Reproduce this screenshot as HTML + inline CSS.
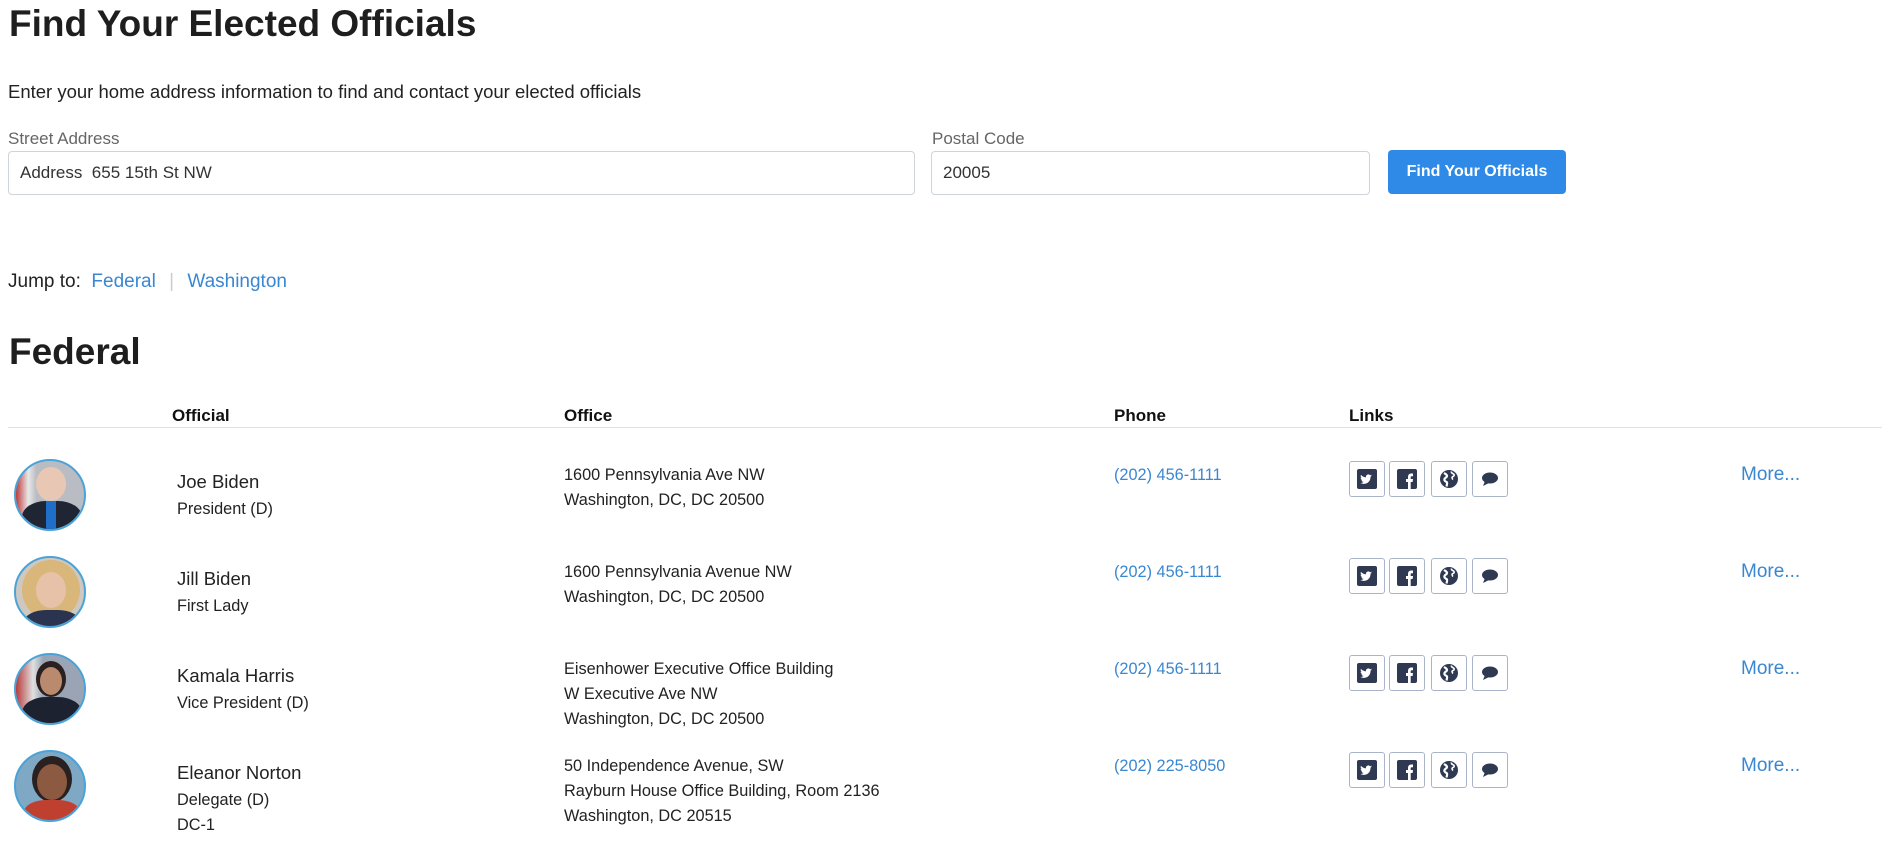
<!DOCTYPE html>
<html><head><meta charset="utf-8"><style>
*{box-sizing:border-box;margin:0;padding:0}
body{width:1882px;height:853px;overflow:hidden;background:#fff;font-family:"Liberation Sans","DejaVu Sans",sans-serif;color:#212529;position:relative}
.a{position:absolute;white-space:nowrap}
h1{position:absolute;font-size:37px;font-weight:bold;left:9px;color:#1e1e1e}
.lbl{font-size:17px;color:#666}
.inp{position:absolute;border:1px solid #ced4da;border-radius:4px;font-size:17px;padding:0 11px;display:flex;align-items:center;color:#333}
.btn{position:absolute;left:1388px;top:150px;width:178px;height:44px;background:#2e8ae6;color:#fff;border-radius:4px;font-size:16px;font-weight:bold;display:flex;align-items:center;justify-content:center}
.th{font-size:17px;font-weight:bold;top:406px;color:#111}
.av{position:absolute;left:14px;width:72px;height:72px;border-radius:50%;border:2px solid #4aa3d8;overflow:hidden}
.nm{font-size:18.5px;color:#222}
.sm{font-size:16.3px;line-height:25px;color:#222}
.blue{color:#3a87d1}
.ic{position:absolute;width:36px;height:36px;border:1px solid #aab4c8;border-radius:3px;display:flex;align-items:center;justify-content:center}
</style></head><body>
<h1 style="top:3px">Find Your Elected Officials</h1>
<div class="a" style="left:8px;top:81px;font-size:18.5px;color:#222">Enter your home address information to find and contact your elected officials</div>
<div class="a lbl" style="left:8px;top:129px">Street Address</div>
<div class="a lbl" style="left:932px;top:129px">Postal Code</div>
<div class="inp" style="left:8px;top:151px;width:907px;height:44px">Address&nbsp; 655 15th St NW</div>
<div class="inp" style="left:931px;top:151px;width:439px;height:44px">20005</div>
<div class="btn">Find Your Officials</div>
<div class="a" style="left:8px;top:271px;font-size:19px;color:#222">Jump to:&nbsp; <span class="blue">Federal</span> <span style="color:#ccc;margin:0 8px">|</span> <span class="blue">Washington</span></div>
<h1 style="top:331px">Federal</h1>
<div class="a th" style="left:172px">Official</div>
<div class="a th" style="left:564px">Office</div>
<div class="a th" style="left:1114px">Phone</div>
<div class="a th" style="left:1349px">Links</div>
<div class="a" style="left:8px;top:427px;width:1874px;height:1px;background:#dee2e6"></div>

<div class="av" style="top:459px;background:linear-gradient(90deg,#c0393b 0,#e8e8e8 18%,#b9bcc2 30%,#b9bcc2 100%)"><div style="position:absolute;left:20px;top:6px;width:30px;height:34px;border-radius:50%;background:#e8c8b4"></div><div style="position:absolute;left:6px;top:40px;width:60px;height:40px;border-radius:40% 40% 0 0;background:#1f2533"></div><div style="position:absolute;left:30px;top:40px;width:10px;height:30px;background:#1f6fc8"></div></div>
<div class="av" style="top:556px;background:#cfc8c0"><div style="position:absolute;left:6px;top:2px;width:58px;height:60px;border-radius:50%;background:#d9b67a"></div><div style="position:absolute;left:20px;top:14px;width:30px;height:36px;border-radius:50%;background:#e8c2a8"></div><div style="position:absolute;left:8px;top:52px;width:56px;height:30px;background:#2a3450;border-radius:40% 40% 0 0"></div></div>
<div class="av" style="top:653px;background:linear-gradient(90deg,#b83a3a 0,#e0e0e0 25%,#9aa4b4 40%)"><div style="position:absolute;left:20px;top:6px;width:30px;height:36px;border-radius:50%;background:#2b2020"></div><div style="position:absolute;left:24px;top:12px;width:22px;height:28px;border-radius:50%;background:#b98a6e"></div><div style="position:absolute;left:6px;top:42px;width:60px;height:40px;background:#1d2230;border-radius:40% 40% 0 0"></div></div>
<div class="av" style="top:750px;background:#7fa8c4"><div style="position:absolute;left:16px;top:4px;width:40px;height:46px;border-radius:50%;background:#2a2020"></div><div style="position:absolute;left:21px;top:12px;width:30px;height:36px;border-radius:50%;background:#8b5a40"></div><div style="position:absolute;left:8px;top:48px;width:56px;height:30px;background:#c0402f;border-radius:40% 40% 0 0"></div></div>

<div class="a nm" style="left:177px;top:471px">Joe Biden</div>
<div class="a sm" style="left:177px;top:497px">President (D)</div>
<div class="a sm" style="left:564px;top:463px">1600 Pennsylvania Ave NW<br>Washington, DC, DC 20500</div>
<div class="a sm blue" style="left:1114px;top:463px">(202) 456-1111</div>

<div class="a nm" style="left:177px;top:568px">Jill Biden</div>
<div class="a sm" style="left:177px;top:594px">First Lady</div>
<div class="a sm" style="left:564px;top:560px">1600 Pennsylvania Avenue NW<br>Washington, DC, DC 20500</div>
<div class="a sm blue" style="left:1114px;top:560px">(202) 456-1111</div>

<div class="a nm" style="left:177px;top:665px">Kamala Harris</div>
<div class="a sm" style="left:177px;top:691px">Vice President (D)</div>
<div class="a sm" style="left:564px;top:657px">Eisenhower Executive Office Building<br>W Executive Ave NW<br>Washington, DC, DC 20500</div>
<div class="a sm blue" style="left:1114px;top:657px">(202) 456-1111</div>

<div class="a nm" style="left:177px;top:762px">Eleanor Norton</div>
<div class="a sm" style="left:177px;top:788px">Delegate (D)<br>DC-1</div>
<div class="a sm" style="left:564px;top:754px">50 Independence Avenue, SW<br>Rayburn House Office Building, Room 2136<br>Washington, DC 20515</div>
<div class="a sm blue" style="left:1114px;top:754px">(202) 225-8050</div>

<div id="icons"></div>
<script>
var tops=[461,558,655,752],h='';
var tw='<svg width="20" height="20" viewBox="0 0 20 20"><rect width="20" height="20" rx="2" fill="#2f3a52"/><path d="M15 6.5c-.5.2-1 .3-1.4.4.5-.3.9-.8 1.1-1.3-.5.3-1 .5-1.6.6a2.4 2.4 0 0 0-4.1 2.2c-2-.1-3.8-1.1-5-2.5-.7 1.1-.3 2.5.7 3.2-.4 0-.8-.1-1.1-.3 0 1.2.8 2.2 1.9 2.4-.4.1-.7.1-1.1 0 .3 1 1.2 1.700 2.3 1.7A4.8 4.8 0 0 1 3.5 14c4.5 2.5 10-.5 10-5.9v-.3c.5-.4.9-.8 1.5-1.3z" fill="#fff"/></svg>';
var fb='<svg width="20" height="20" viewBox="0 0 20 20"><rect width="20" height="20" rx="2" fill="#2f3a52"/><path d="M11 20v-7H9v-3h2V8c0-2.3 1.3-3.5 3.4-3.5H16v2.8h-1.2c-.9 0-1.1.4-1.1 1.1V10H16l-.4 3h-1.9v7z" fill="#fff"/></svg>';
var gl='<svg width="20" height="20" viewBox="0 0 20 20"><circle cx="10" cy="10" r="9" fill="#2f3a52"/><path d="M5 4c1.5 1 3 1.5 3 3s-2 1.5-2.5 3 1 2.5 2 3 .5 2.5 0 4.5" stroke="#fff" stroke-width="2.2" fill="none"/><path d="M12.5 2.5c-.5 1.5 1 2 2 2.5s1 2-.5 2.5-1 2 0 3" stroke="#fff" stroke-width="1.6" fill="none"/></svg>';
var ch='<svg width="20" height="20" viewBox="0 0 20 20"><ellipse cx="10" cy="9" rx="8" ry="5.5" fill="#2f3a52"/><path d="M5 12l-2 5 6-3z" fill="#2f3a52"/></svg>';
var ics=[tw,fb,gl,ch],xs=[1349,1389,1431,1472];
tops.forEach(function(t){for(var i=0;i<4;i++)h+='<div class="ic" style="left:'+xs[i]+'px;top:'+t+'px">'+ics[i]+'</div>';h+='<div class="a blue" style="left:1741px;top:'+(t+3)+'px;font-size:19px">More...</div>';});
document.getElementById('icons').innerHTML=h;
</script>
</body></html>
